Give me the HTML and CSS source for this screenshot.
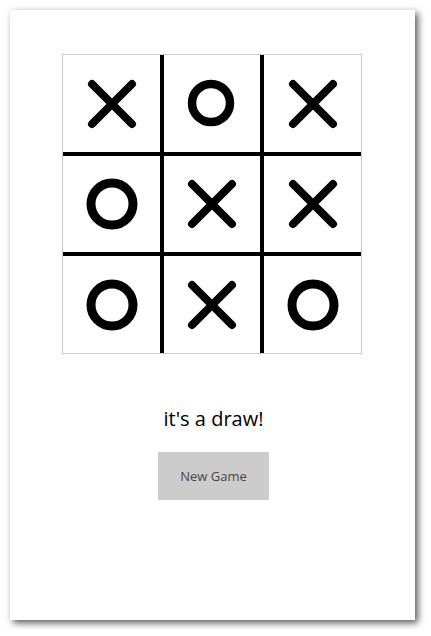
FILE: index.html
```html
<!DOCTYPE html>
<html lang="en">
<head>
<meta charset="utf-8">
<title>Tic Tac Toe</title>
<link rel="stylesheet" href="styles.css">
</head>
<body>
<div class="card">
  <div class="board">
    <div class="cell"><svg class="mark" viewBox="0 0 60 60"><path d="M10 10 L50 50 M50 10 L10 50"/></svg></div>
    <div class="cell"><svg class="mark" viewBox="0 0 60 60"><circle class="mid" cx="29" cy="29" r="19"/></svg></div>
    <div class="cell"><svg class="mark" viewBox="0 0 60 60"><path d="M10 10 L50 50 M50 10 L10 50"/></svg></div>
    <div class="cell"><svg class="mark" viewBox="0 0 60 60"><circle class="big" cx="30" cy="30" r="21"/></svg></div>
    <div class="cell"><svg class="mark" viewBox="0 0 60 60"><path d="M10 10 L50 50 M50 10 L10 50"/></svg></div>
    <div class="cell"><svg class="mark" viewBox="0 0 60 60"><path d="M10 10 L50 50 M50 10 L10 50"/></svg></div>
    <div class="cell"><svg class="mark" viewBox="0 0 60 60"><circle class="big" cx="30" cy="30" r="21"/></svg></div>
    <div class="cell"><svg class="mark" viewBox="0 0 60 60"><path d="M10 10 L50 50 M50 10 L10 50"/></svg></div>
    <div class="cell"><svg class="mark" viewBox="0 0 60 60"><circle class="big" cx="30" cy="30" r="21"/></svg></div>
  </div>
  <p class="status">it's a draw!</p>
  <button class="new-game">New Game</button>
</div>
</body>
</html>
```

FILE: styles.css
```css
html, body {
  margin: 0;
  padding: 0;
  background: #fff;
}
body {
  font-family: "Open Sans", "Liberation Sans", sans-serif;
}
.card {
  margin: 10px;
  width: 405px;
  height: 610px;
  box-sizing: border-box;
  padding-top: 44px;
  background: #fff;
  box-shadow: 3px 3px 7px rgba(0, 0, 0, 0.65);
  display: flex;
  flex-direction: column;
  align-items: center;
}
.board {
  width: 298px;
  height: 298px;
  margin-right: 1px;
  border: 1px solid #ccc;
  background: #000;
  display: grid;
  grid-template-columns: 97px 96px 97px;
  grid-template-rows: 97px 96px 97px;
  gap: 4px;
}
.cell {
  background: #fff;
  display: flex;
  align-items: center;
  justify-content: center;
}
.mark {
  width: 60px;
  height: 60px;
  fill: none;
  stroke: #000;
  stroke-width: 8;
  stroke-linecap: round;
}
.mark circle.mid {
  stroke-width: 8.5;
}
.mark circle.big {
  stroke-width: 9;
}
.status {
  margin: 51px 0 0 2px;
  font-size: 20px;
  line-height: 27px;
  color: #000;
}
.new-game {
  margin: 20px 0 0 2px;
  width: 111px;
  height: 48px;
  border: none;
  background: #ccc;
  color: #4a4440;
  font-family: "Open Sans", "Liberation Sans", sans-serif;
  font-size: 13px;
  padding: 0;
}
```
